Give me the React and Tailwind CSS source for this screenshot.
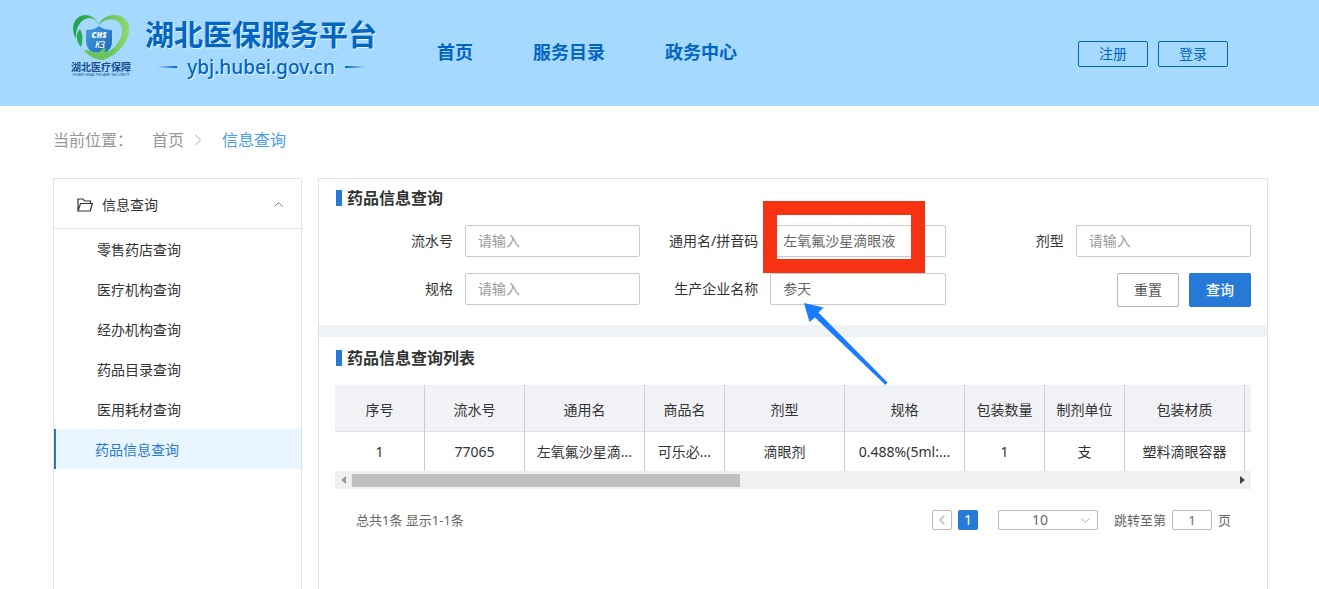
import { ChevronDown, ChevronLeft, ChevronRight, ChevronUp } from 'lucide-react';

const NAV = ['首页', '服务目录', '政务中心'];

const MENU = [
    '零售药店查询',
    '医疗机构查询',
    '经办机构查询',
    '药品目录查询',
    '医用耗材查询',
    '药品信息查询',
];

const COLUMNS = [
    { label: '序号', width: 'w-[90px]', value: '1' },
    { label: '流水号', width: 'w-[100px]', value: '77065' },
    { label: '通用名', width: 'w-[120px]', value: '左氧氟沙星滴...' },
    { label: '商品名', width: 'w-[80px]', value: '可乐必...' },
    { label: '剂型', width: 'w-[120px]', value: '滴眼剂' },
    { label: '规格', width: 'w-[120px]', value: '0.488%(5ml:...' },
    { label: '包装数量', width: 'w-[80px]', value: '1' },
    { label: '制剂单位', width: 'w-[80px]', value: '支' },
    { label: '包装材质', width: 'w-[120px]', value: '塑料滴眼容器' },
];

const Emblem = () => (
    <div className="flex w-[60px] flex-col items-center">
        <svg viewBox="0 0 58 47" className="h-[47px] w-[58px]" aria-hidden="true">
            <defs>
                <linearGradient id="leaf" x1="0" y1="0" x2="1" y2="0">
                    <stop offset="0" stopColor="#18a04c" />
                    <stop offset="0.5" stopColor="#55bd50" />
                    <stop offset="1" stopColor="#93da72" />
                </linearGradient>
                <linearGradient id="shield" x1="0" y1="0" x2="1" y2="1">
                    <stop offset="0" stopColor="#4a9be0" />
                    <stop offset="1" stopColor="#1767b8" />
                </linearGradient>
            </defs>
            {/* Escudo */}
            <path d="M27 12 C23 15 19 16 14 16 V27 C14 34 19 39 27 42 C36 39 40 34 40 27 V16 C35 16 31 15 27 12Z" fill="url(#shield)" />
            {/* Corazón */}
            <path
                d="M27 10 C21 -1 8 -2 3 7 C0 13 1 20 4 25 C3 15 8 5 17 4 C22 4 25 7 27 11 C31 6 37 4 43 6 C51 9 52 19 47 27 C43 34 37 38 30 41 L26 45 L31 46 C43 42 54 32 57 19 C59 8 52 1 43 1 C36 1 30 4 27 10Z"
                fill="url(#leaf)"
            />
            <path d="M8 15 C4 19 3 26 9 33 C11 27 11 20 8 15Z" fill="#2aa852" />
            {/* Mano */}
            <path d="M12 36 C18 36 22 39 27 38 L32 34 L34 35 L32 38 L38 37 L43 34 L38 41 L31 46 C23 46 16 42 12 36Z" fill="#6cc45e" />
            <text x="27" y="24" textAnchor="middle" fill="#fff" fontSize="8" fontWeight="900" fontStyle="italic">CHS</text>
            <text x="28" y="34" textAnchor="middle" fill="#fff" fontSize="9" fontWeight="500" fontStyle="italic">K3</text>
        </svg>
        <span className="text-[10px] leading-[12px] font-bold whitespace-nowrap text-[#174f91]">湖北医疗保障</span>
        <span className="text-[4px] leading-[4px] whitespace-nowrap text-[#174f91]">HUBEI HEALTHCARE SECURITY</span>
    </div>
);

const Header = () => (
    <header className="flex h-[106px] items-start bg-[#a6d9ff] pr-[91px] pl-[71px] text-[#0265bf]">
        <a href="#" className="flex pt-[14px]">
            <Emblem />
            <span className="ml-[14px] flex flex-col items-center [text-shadow:1px_1px_0_#e8f6ff]">
                <span className="text-[29px] leading-[42px] font-bold whitespace-nowrap">湖北医保服务平台</span>
                <span className="flex items-center gap-[10px] text-[19px] leading-[22px] font-medium">
                    <span className="h-[2px] w-5 bg-gradient-to-r from-transparent to-[#0265bf]" />
                    ybj.hubei.gov.cn
                    <span className="h-[2px] w-5 bg-gradient-to-l from-transparent to-[#0265bf]" />
                </span>
            </span>
        </a>
        <nav className="ml-[60px] flex gap-[60px] pt-[38px] text-[18px] leading-[28px] font-bold whitespace-nowrap">
            {NAV.map((item) => (
                <a key={item} href="#">{item}</a>
            ))}
        </nav>
        <div className="ml-auto flex gap-[10px] pt-[41px]">
            {['注册', '登录'].map((label) => (
                <button key={label} className="h-[26px] w-[70px] rounded-[2px] border border-[#0265bf] text-[14px] leading-[24px]">
                    {label}
                </button>
            ))}
        </div>
    </header>
);

const Sidebar = () => (
    <aside className="w-[249px] shrink-0 border border-b-0 border-[#e3e3e3]">
        <button className="flex h-[50px] w-full items-center border-b border-[#e3e3e3] pt-[2px] pr-[15px] pl-[23px] text-[14px]">
            <svg viewBox="0 0 16 14" className="h-[14px] w-4" fill="none" stroke="#333" strokeWidth="1.2" aria-hidden="true">
                <path d="M1 13 V1 H6 L7.5 3 H13.5 V5.5 M1 13 L3.5 5.5 H15.3 L13.3 13Z" />
            </svg>
            <span className="ml-[9px]">信息查询</span>
            <ChevronUp className="ml-auto" size={15} strokeWidth={1.5} color="#666" />
        </button>
        <ul>
            {MENU.map((item) => (
                <li key={item}>
                    <a
                        href="#"
                        className={`flex h-10 items-center text-[14px] ${item === '药品信息查询' ? 'border-l-2 border-[#2a76c4] bg-[#e9f5ff] pl-[39px] text-[#2a7bd3]' : 'pl-[43px]'}`}
                    >
                        {item}
                    </a>
                </li>
            ))}
        </ul>
    </aside>
);

const Field = ({ id, label, value, children }) => (
    <div className="flex items-start">
        <label htmlFor={id} className="w-[130px] shrink-0 pr-3 text-right text-[14px] leading-8 whitespace-nowrap">{label}</label>
        <div className="relative min-w-0 flex-1">
            <input
                id={id}
                defaultValue={value}
                placeholder="请输入"
                className="block h-8 w-full rounded-[2px] border border-[#c8cacd] bg-white px-3 pb-[2px] text-[14px] text-[#666] placeholder:text-[#999]"
            />
            {children}
        </div>
    </div>
);

const SectionTitle = ({ children }) => (
    <h2 className="flex items-center gap-[5px] pl-px text-[16px] leading-6 font-bold">
        <span className="h-4 w-[6px] bg-[#2779d8]" />
        {children}
    </h2>
);

const SearchForm = () => (
    <section className="px-4 pt-[7px] pb-[18px]">
        <SectionTitle>药品信息查询</SectionTitle>
        <form className="mt-[15px] grid grid-cols-3 gap-y-4" onSubmit={(e) => e.preventDefault()}>
            <Field id="serial" label="流水号" />
            <Field id="generic" label="通用名/拼音码" value="左氧氟沙星滴眼液">
                {/* Marco rojo sobre el campo */}
                <span className="pointer-events-none absolute -top-6 -left-[7px] z-10 h-[72px] w-[162px] border-14 border-[#f53211]" />
            </Field>
            <Field id="dosage" label="剂型" />
            <Field id="spec" label="规格" />
            <Field id="maker" label="生产企业名称" value="参天">
                {/* Flecha azul hacia el campo */}
                <svg viewBox="0 0 88 86" className="pointer-events-none absolute top-[27px] left-[30px] z-10 h-[86px] w-[88px]" aria-hidden="true">
                    <path d="M4 3 L23.5 7.5 L18.5 12.5 L87.5 82.5 L85.5 85 L15 17.5 L9.5 22Z" fill="#1b7bff" />
                </svg>
            </Field>
            <div className="flex justify-end gap-[10px] text-[14px]">
                <button type="reset" className="h-[34px] w-[62px] rounded-[2px] border border-[#b5b7ba] pb-[2px] text-[#555]">重置</button>
                <button type="submit" className="h-[34px] w-[62px] rounded-[2px] bg-[#2779d8] pb-[2px] font-medium text-white">查询</button>
            </div>
        </form>
    </section>
);

const ResultTable = () => (
    <div className="mt-[15px] overflow-hidden">
        <table className="w-full table-fixed border-separate border-spacing-0 text-center text-[14px] whitespace-nowrap">
            <thead>
                <tr className="h-[47px] bg-[#f0f2f5]">
                    {COLUMNS.map((col) => (
                        <th key={col.label} className={`${col.width} border-r border-b border-r-[#c9cbce] border-b-[#dfe0e2] pt-[2px] font-normal`}>
                            {col.label}
                        </th>
                    ))}
                    <th className="border-b border-b-[#dfe0e2]" />
                </tr>
            </thead>
            <tbody>
                <tr className="h-[39px]">
                    {COLUMNS.map((col) => (
                        <td key={col.label} className="border-r border-[#c9cbce]">{col.value}</td>
                    ))}
                    <td />
                </tr>
            </tbody>
        </table>
        {/* Barra de desplazamiento */}
        <div className="flex h-[18px] items-center bg-[#f0f0f0] px-[6px]">
            <span className="border-y-4 border-r-[5px] border-y-transparent border-r-[#999]" />
            <span className="mx-[6px] flex-1">
                <span className="block h-[13px] w-[44%] bg-[#c0c0c0]" />
            </span>
            <span className="border-y-4 border-l-[5px] border-y-transparent border-l-[#444]" />
        </div>
    </div>
);

const Pagination = () => (
    <div className="mt-[21px] flex items-center pr-5 pl-[21px] text-[13px] leading-5 whitespace-nowrap text-[#666]">
        <span>总共1条 显示1-1条</span>
        <button aria-label="上一页" className="ml-auto flex size-5 items-center justify-center rounded-[2px] border border-[#b8babd]">
            <ChevronLeft className="shrink-0" size={16} strokeWidth={2} color="#b5b5b5" />
        </button>
        <button className="ml-[6px] flex size-5 items-center justify-center rounded-[2px] bg-[#2779d8] text-[14px] text-white">1</button>
        <span className="relative ml-5">
            <select aria-label="每页条数" className="block h-5 w-[100px] appearance-none rounded-[2px] border border-[#b8babd] bg-white pr-4 text-center text-[14px] leading-[18px] [text-align-last:center]">
                <option>10</option>
            </select>
            <ChevronDown className="pointer-events-none absolute top-[3px] right-[5px]" size={15} strokeWidth={1.5} color="#aaa" />
        </span>
        <label htmlFor="page" className="ml-4">跳转至第</label>
        <input id="page" defaultValue="1" className="mx-[6px] h-5 w-10 rounded-[2px] border border-[#b8babd] text-center text-[13px]" />
        <span>页</span>
    </div>
);

const App = () => (
    <div className="flex min-h-screen flex-col bg-white font-['Noto_Sans','Noto_Sans_CJK_SC',sans-serif] text-[#333]">
        <Header />
        <div className="flex flex-1 flex-col pr-[51px] pl-[53px]">
            <div className="flex items-center pt-[22px] text-[16px] leading-6 text-[#999]">
                <span>当前位置：</span>
                <a href="#" className="ml-[19px]">首页</a>
                <ChevronRight className="mx-[4px]" size={20} strokeWidth={1.2} color="#aaa" />
                <a href="#" className="ml-[10px] text-[#4a9df5]">信息查询</a>
            </div>
            <div className="mt-[26px] flex flex-1 gap-4">
                <Sidebar />
                <main className="min-w-0 flex-1 border border-b-0 border-[#e3e3e3]">
                    <SearchForm />
                    <div className="h-3 bg-[#eff3f5]" />
                    <section className="px-4 pt-[9px]">
                        <SectionTitle>药品信息查询列表</SectionTitle>
                        <ResultTable />
                        <Pagination />
                    </section>
                </main>
            </div>
        </div>
    </div>
);

export default App;
